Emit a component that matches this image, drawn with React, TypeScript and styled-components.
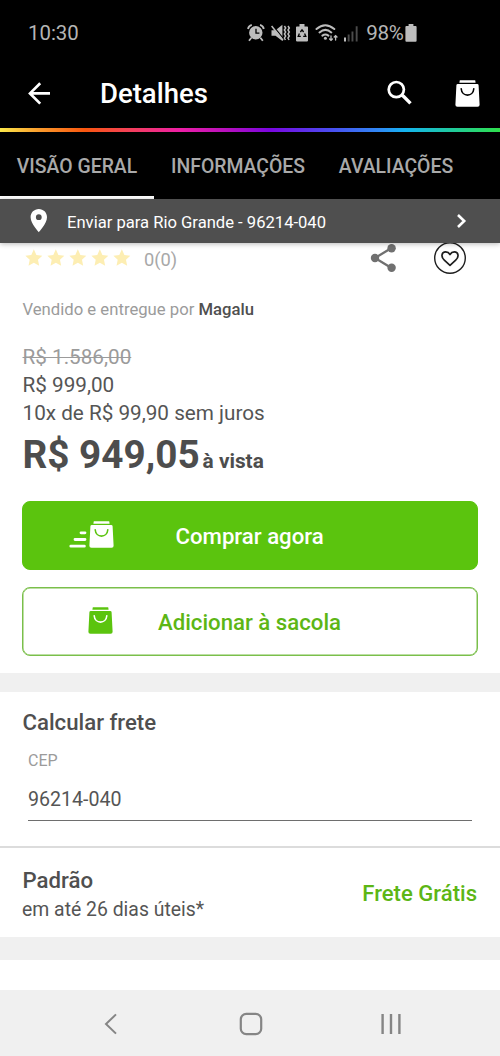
import React from "react";
import styled, { createGlobalStyle } from "styled-components";

const GlobalStyle = createGlobalStyle`
  * { box-sizing: border-box; }
  body { margin: 0; background: #fff; font-family: Roboto, "Liberation Sans", sans-serif; color: #555; }
  button { font-family: inherit; margin: 0; padding: 0; border: 0; background: none; }
  svg { display: block; flex: none; }
`;

const Screen = styled.div`
  width: 500px;
  height: 1056px;
  display: flex;
  flex-direction: column;
  overflow: hidden;
  background: #fff;
`;

const StatusBar = styled.div`
  height: 66px;
  flex: none;
  padding: 0 82px 0 28px;
  display: flex;
  align-items: center;
  justify-content: space-between;
  background: #000;
  color: #b5b5b5;
  font-size: 20.4px;
`;

const StatusIcons = styled.div`
  display: flex;
  align-items: center;
`;

const Battery = styled.span`
  font-size: 20.6px;
  letter-spacing: -0.3px;
  margin: 0 1.5px 0 7px;
`;

const Header = styled.header`
  height: 62px;
  flex: none;
  padding: 0 20px 8px 27px;
  display: flex;
  align-items: center;
  background: #000;
  color: #fff;
`;

const Title = styled.h1`
  flex: 1;
  margin: 2px 0 0 49px;
  font-size: 27.5px;
  line-height: 32px;
  font-weight: 500;
`;

const HeaderActions = styled.div`
  display: flex;
  align-items: center;
  gap: 43px;
`;

const Rainbow = styled.div`
  height: 4px;
  flex: none;
  background: linear-gradient(90deg, #fbe84a 0%, #fa9a2c 8%, #f9560f 17%, #f4405a 26%, #ee1fa6 36%, #b30fc0 46%, #7a06e0 54%, #4a4cf0 66%, #2f8af5 76%, #14b4f0 81%, #1fc9a0 90%, #2fe04c 100%);
`;

const Tabs = styled.nav`
  height: 67px;
  flex: none;
  display: flex;
  background: #000;
`;

const Tab = styled.button<{ $width: number; $active?: boolean }>`
  width: ${(p) => p.$width}px;
  padding-top: 5px;
  border-bottom: 3px solid ${(p) => (p.$active ? "#fff" : "transparent")};
  color: #a9a9a9;
  font-size: 19.4px;
  font-weight: 500;
  white-space: nowrap;
`;

const Location = styled.div`
  position: relative;
  z-index: 1;
  height: 44px;
  flex: none;
  padding: 0 32px 0 30px;
  display: flex;
  align-items: center;
  background: #4f4f4f;
  color: #fff;
  font-size: 16.6px;
  box-shadow: 0 1px 5px rgba(0, 0, 0, 0.28);
`;

const Address = styled.span`
  flex: 1;
  margin: 2px 0 0 19px;
`;

const Product = styled.section`
  height: 430px;
  flex: none;
  padding: 0 22px;
`;

const RatingRow = styled.div`
  height: 30px;
  display: flex;
  align-items: center;
`;

const Stars = styled.div`
  margin-left: 1.5px;
  display: flex;
  gap: 2.5px;
`;

const RatingCount = styled.span`
  flex: 1;
  margin: 2px 0 0 12px;
  color: #a8a8a8;
  font-size: 18.3px;
`;

const Favorite = styled.button`
  margin: 0 11px 0 36px;
`;

const Seller = styled.p`
  margin: 23px 0 19px 0.5px;
  font-size: 16.7px;
  line-height: 28px;
  color: #9b9b9b;
  b { font-weight: 500; color: #4f4f4f; }
`;

const PriceLine = styled.p<{ $old?: boolean }>`
  margin: 0 0 0 0.5px;
  font-size: 20.7px;
  line-height: 28px;
  color: ${(p) => (p.$old ? "#9b9b9b" : "#555")};
  text-decoration: ${(p) => (p.$old ? "line-through" : "none")};
  text-decoration-thickness: 1px;
`;

const CashPrice = styled.p`
  margin: 0 0 18px 0.5px;
  height: 56px;
  line-height: 56px;
  font-size: 38.7px;
  font-weight: 700;
  color: #4d4d4d;
  small { margin-left: 3px; font-size: 20.8px; font-weight: 700; }
`;

const BuyButton = styled.button<{ $outline?: boolean }>`
  width: 456px;
  height: 69px;
  margin-bottom: 17px;
  padding: 0 0 2px ${(p) => (p.$outline ? 65 : 45.5)}px;
  display: flex;
  align-items: center;
  border-radius: 8px;
  border: 1.5px solid ${(p) => (p.$outline ? "#7abf4a" : "#5bc40e")};
  background: ${(p) => (p.$outline ? "#fff" : "#5bc40e")};
  box-shadow: ${(p) => (p.$outline ? "inset 0 0 0 0.5px #7abf4a" : "none")};
  color: ${(p) => (p.$outline ? "#5cb615" : "#fff")};
  font-size: 22.2px;
  font-weight: 500;
`;

const ButtonLabel = styled.span<{ $gap: number }>`
  margin: 3px 0 0 ${(p) => p.$gap}px;
`;

const Separator = styled.div<{ $height: number }>`
  height: ${(p) => p.$height}px;
  flex: none;
  background: #f0f0f0;
`;

const Shipping = styled.section`
  height: 156px;
  flex: none;
  padding: 16px 22px 0;
  border-bottom: 2px solid #dcdcdc;
`;

const SectionTitle = styled.h2`
  margin: 0 0 0 0.5px;
  font-size: 22.2px;
  line-height: 29px;
  font-weight: 500;
  color: #4f4f4f;
`;

const ZipField = styled.div`
  margin: 12px 6px 0;
  padding-bottom: 5px;
  display: flex;
  flex-direction: column;
  border-bottom: 1px solid #6e6e6e;
`;

const ZipLabel = styled.label`
  font-size: 16px;
  line-height: 23px;
  color: #9b9b9b;
`;

const ZipValue = styled.span`
  margin-top: 13px;
  font-size: 19.6px;
  line-height: 30px;
`;

const Delivery = styled.section`
  height: 89px;
  flex: none;
  padding: 5px 23px 0 22px;
  display: flex;
  align-items: center;
  justify-content: space-between;
`;

const DeliveryTime = styled.p`
  margin: 0;
  font-size: 19.4px;
  line-height: 29px;
`;

const Free = styled.strong`
  margin-bottom: 4px;
  color: #5cb615;
  font-size: 22.1px;
  font-weight: 500;
`;

const NextSection = styled.div`
  height: 30px;
  flex: none;
`;

const SystemNav = styled.nav`
  flex: 1;
  padding: 2px 98px 0 103px;
  display: flex;
  align-items: center;
  background: #f0f0f0;
`;

const NavButton = styled.button<{ $gap?: number }>`
  margin-left: ${(p) => p.$gap ?? 0}px;
`;

const BagShape = ({ color, smile }: { color: string; smile: string }) => (
  <g>
    <path d="M4.8 0.2h15.4l.4 2.6H4.4z" fill={color} />
    <path d="M2.8 4h19.4q1.3 0 1.4 1.3l1 19.4q.1 2-2 2H2.4q-2.1 0-2-2l1-19.4q.1-1.3 1.4-1.3z" fill={color} />
    <path d="M6.2 8.8c.6 8.4 12 8.4 12.6 0" fill="none" stroke={smile} strokeWidth="1.6" strokeLinecap="round" />
  </g>
);

const Bag = ({ color, smile }: { color: string; smile: string }) => (
  <svg width="25" height="27" viewBox="0 0 25 27"><BagShape color={color} smile={smile} /></svg>
);

const FastBag = () => (
  <svg width="46" height="27" viewBox="0 0 46 27">
    <path d="M12 11.8h4M6 18.5h10M1.8 25.2h13.6" stroke="#fff" strokeWidth="2.8" strokeLinecap="round" />
    <g transform="translate(20 0)"><BagShape color="#fff" smile="#5bc40e" /></g>
  </svg>
);

const StatusGlyphs = () => (
  <svg width="112" height="20" viewBox="0 0 112 20" fill="#bdbdbd">
    <g>
      <circle cx="8.8" cy="9.8" r="6.7" />
      <path d="M9 5.8V10.2h3.4" fill="none" stroke="#000" strokeWidth="1.3" />
      <path d="M1 6Q1.6 2.6 4.8 1.8M16.8 6Q16.2 2.6 13 1.8M4.4 14.8l-2.4 3M13.4 14.8l2.4 3" fill="none" stroke="#bdbdbd" strokeWidth="1.8" />
    </g>
    <g>
      <path d="M24.5 7.2h4L35.4 1.8v16.2l-6.9-5.2h-4z" />
      <path d="M25.6 2.2L36.4 15.6" stroke="#000" strokeWidth="1.2" />
      <path d="M24.6 3L36 17.2" stroke="#bdbdbd" strokeWidth="1.5" />
      <path d="M37.4 3l1.3 2-1.3 2 1.3 2-1.3 2 1.3 2-1.3 2 1 2M41 3l1.3 2-1.3 2 1.3 2-1.3 2 1.3 2-1.3 2 1 2" fill="none" stroke="#bdbdbd" strokeWidth="1.5" />
    </g>
    <g>
      <path d="M52.5 1h5v2.4h2.7q.8 0 .8.8v13.4q0 .8-.8.8H49.8q-.8 0-.8-.8V4.2q0-.8.8-.8h2.7z" />
      <path d="M53.4 9L55 6.8 56.6 9M57.6 10.6l1.2 2.8h-2.6M53.8 13.4h-2.6l1.2-2.8" fill="none" stroke="#000" strokeWidth="1.3" />
    </g>
    <g fill="none" stroke="#bdbdbd" strokeWidth="2" strokeLinecap="round">
      <path d="M69.5 6q8.7-7.6 17.8 0M72.5 9.4q5.9-5 11.8 0M75.4 12.6q3-2.2 6 0" />
      <path d="M84 13v4.4M82.6 16l1.4 1.4 1.4-1.4M88.6 17v-4.4M87.2 14l1.4-1.4L90 14" strokeWidth="1.3" />
    </g>
    <circle cx="78.4" cy="15.2" r="1.5" />
    <path d="M97 14.4h2v4h-2z" />
    <path d="M100.7 11.6h1.9v6.8h-1.9zM104.5 8.4h1.9v10h-1.9zM108.7 3.2h1.9v15.2h-1.9z" fill="#4b4b4b" />
  </svg>
);

const BatteryGlyph = () => (
  <svg width="13" height="18" viewBox="0 0 13 18" fill="#bdbdbd">
    <path d="M3.6 0h4.8v2h2.2q1 0 1 1v13.8q0 1-1 1H1.4q-1 0-1-1V3q0-1 1-1h2.2z" />
  </svg>
);

const BackArrow = () => (
  <svg width="24" height="24" viewBox="0 0 24 24" fill="none" stroke="#fff" strokeWidth="2.7">
    <path d="M23 12.4H3M13.2 2.2L3 12.4l10.2 10.2" />
  </svg>
);

const SearchIcon = () => (
  <svg width="25" height="26" viewBox="0 0 25 26" fill="none" stroke="#fff">
    <circle cx="9.3" cy="9.6" r="7.6" strokeWidth="2.7" />
    <path d="M14.5 14.8l2 1.5L23.5 23.4" strokeWidth="3.4" />
  </svg>
);

const Pin = () => (
  <svg width="18" height="24" viewBox="0 0 18 24">
    <path fillRule="evenodd" fill="#fff" d="M8.8 0C4.2 0 .6 3.6.6 8.2c0 6.1 8.2 15 8.2 15s8.2-8.9 8.2-15C17 3.6 13.4 0 8.8 0zm0 11.1a2.9 2.9 0 110-5.8 2.9 2.9 0 010 5.8z" />
  </svg>
);

const Chevron = () => (
  <svg width="12" height="16" viewBox="0 0 12 16" fill="none" stroke="#fff" strokeWidth="2.6">
    <path d="M2 2l6.2 6L2 14" />
  </svg>
);

const Star = () => (
  <svg width="19.7" height="20" viewBox="0 0 20 20">
    <path d="M10 1.2l2.6 5.7 6 .7-4.4 4.2 1.2 6.1-5.4-3.1-5.4 3.1 1.2-6.1L1.4 7.6l6-.7z" fill="#fdeeb3" />
  </svg>
);

const Share = () => (
  <svg width="27" height="30" viewBox="0 0 27 30" fill="#707070">
    <path d="M5 15L21.5 5M5 15l16.5 10" stroke="#707070" strokeWidth="2.3" />
    <circle cx="5" cy="15" r="4.2" />
    <circle cx="21.6" cy="5.2" r="4.2" />
    <circle cx="21.6" cy="24.8" r="4.2" />
  </svg>
);

const HeartIcon = () => (
  <svg width="34" height="34" viewBox="0 0 34 34" fill="none" stroke="#1e1e1e">
    <circle cx="17" cy="17" r="15.3" strokeWidth="1.4" />
    <path d="M17 24.4l-5.7-5.2C7.7 15.9 8.4 10.9 12.7 10.9c1.9 0 3.4 1.1 4.3 2.6.9-1.5 2.4-2.6 4.3-2.6 4.3 0 5 5 1.4 8.3z" strokeWidth="1.7" strokeLinejoin="round" />
  </svg>
);

const NavBack = () => (
  <svg width="15" height="22" viewBox="0 0 15 22" fill="none" stroke="#858585" strokeWidth="2">
    <path d="M13 1.4L3 11l10 9.6" />
  </svg>
);

const NavHome = () => (
  <svg width="24" height="24" viewBox="0 0 24 24" fill="none" stroke="#858585" strokeWidth="2.2">
    <rect x="1.8" y="1.8" width="20.4" height="20.4" rx="5.5" />
  </svg>
);

const NavRecents = () => (
  <svg width="22" height="22" viewBox="0 0 22 22" stroke="#858585" strokeWidth="2.4">
    <path d="M2.6 1v20M11 1v20M19.4 1v20" />
  </svg>
);

export default function App() {
  return (
    <Screen>
      <GlobalStyle />
      <StatusBar>
        <span>10:30</span>
        <StatusIcons>
          <StatusGlyphs />
          <Battery>98%</Battery>
          <BatteryGlyph />
        </StatusIcons>
      </StatusBar>
      <Header>
        <BackArrow />
        <Title>Detalhes</Title>
        <HeaderActions>
          <SearchIcon />
          <Bag color="#fff" smile="#000" />
        </HeaderActions>
      </Header>
      <Rainbow />
      <Tabs>
        <Tab $width={154} $active>VISÃO GERAL</Tab>
        <Tab $width={168}>INFORMAÇÕES</Tab>
        <Tab $width={148}>AVALIAÇÕES</Tab>
      </Tabs>
      <Location>
        <Pin />
        <Address>Enviar para Rio Grande - 96214-040</Address>
        <Chevron />
      </Location>
      <Product>
        <RatingRow>
          <Stars>{[0, 1, 2, 3, 4].map((i) => <Star key={i} />)}</Stars>
          <RatingCount>0(0)</RatingCount>
          <Share />
          <Favorite aria-label="Favoritar"><HeartIcon /></Favorite>
        </RatingRow>
        <Seller>Vendido e entregue por <b>Magalu</b></Seller>
        <PriceLine $old>R$ 1.586,00</PriceLine>
        <PriceLine>R$ 999,00</PriceLine>
        <PriceLine>10x de R$ 99,90 sem juros</PriceLine>
        <CashPrice>R$ 949,05<small>à vista</small></CashPrice>
        <BuyButton>
          <FastBag />
          <ButtonLabel $gap={61}>Comprar agora</ButtonLabel>
        </BuyButton>
        <BuyButton $outline>
          <Bag color="#5bc40e" smile="#fff" />
          <ButtonLabel $gap={45}>Adicionar à sacola</ButtonLabel>
        </BuyButton>
      </Product>
      <Separator $height={19} />
      <Shipping>
        <SectionTitle>Calcular frete</SectionTitle>
        <ZipField>
          <ZipLabel>CEP</ZipLabel>
          <ZipValue>96214-040</ZipValue>
        </ZipField>
      </Shipping>
      <Delivery>
        <div>
          <SectionTitle>Padrão</SectionTitle>
          <DeliveryTime>em até 26 dias úteis*</DeliveryTime>
        </div>
        <Free>Frete Grátis</Free>
      </Delivery>
      <Separator $height={23} />
      <NextSection />
      <SystemNav>
        <NavButton aria-label="Voltar"><NavBack /></NavButton>
        <NavButton $gap={120.5} aria-label="Início"><NavHome /></NavButton>
        <NavButton $gap={117} aria-label="Recentes"><NavRecents /></NavButton>
      </SystemNav>
    </Screen>
  );
}
